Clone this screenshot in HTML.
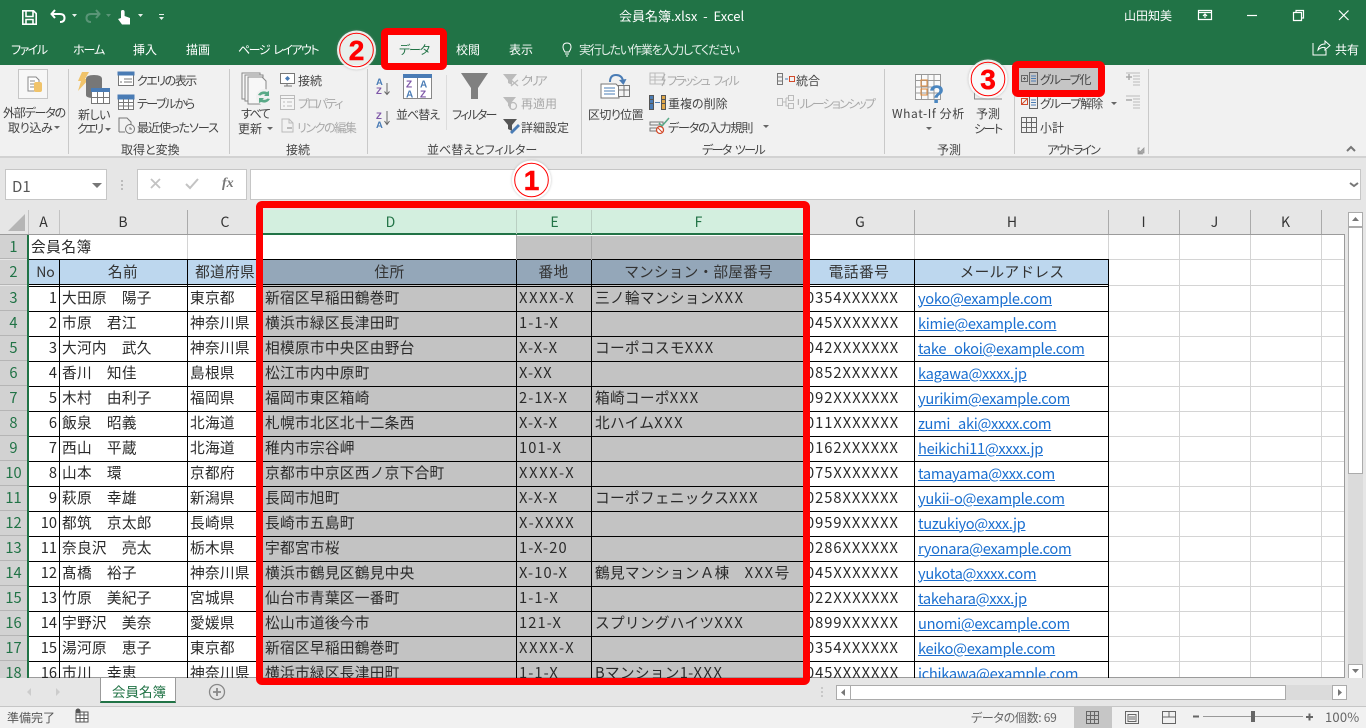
<!DOCTYPE html>
<html lang="ja"><head><meta charset="utf-8"><title>会員名簿.xlsx - Excel</title>
<style>
html,body{margin:0;padding:0;width:1366px;height:728px;overflow:hidden;background:#e6e6e6}
body{position:relative;font-family:"Liberation Sans","Noto Sans CJK JP",sans-serif}
div,span,a{position:absolute;box-sizing:border-box}
i{font-style:normal;letter-spacing:1.6px}
.t{white-space:nowrap;font:12px/16px "Noto Sans CJK JP",sans-serif;font-feature-settings:"palt";color:#444;margin-top:1px}
.w{color:#fff}.g{color:#a9a9a9}
.sep{width:1px;top:69px;height:85px;background:#c9c9c9}
svg{position:absolute;left:0;top:0}
#sheet{left:0;top:0;width:1366px;height:678px;overflow:hidden;font:14.67px/24px "Noto Sans CJK JP",sans-serif;color:#2a2a2a}
.r{left:0;width:1345px;height:25px}
.r span{top:0;white-space:nowrap}
.r .n{left:0;width:27px;text-align:center;color:#217346;background:#d2d2d2;height:25px;border-bottom:1px solid #b5b5b5}
.r .a{left:28px;width:29px;text-align:right}
.r .b{left:62px;letter-spacing:.3px}.r .c{left:190px;letter-spacing:.3px}.r .d{left:265px;letter-spacing:.3px}.r .e{left:519px;letter-spacing:1.1px}.r .x{letter-spacing:1.7px}.r .f{left:595px;letter-spacing:.3px}.r .h{left:806px;letter-spacing:1px}
.r .m{left:918px;top:1px;color:#1a6fd0;text-decoration:underline;text-underline-offset:1px;letter-spacing:-.3px}
.ln{left:28px;width:1080px;height:1px;background:#000}
.lg{left:1108px;width:236px;height:1px;background:#d4d4d4}
.v{width:1px;background:#000;top:259px;height:419px}
.vg{width:1px;background:#d4d4d4;top:235px;height:443px}
.hd{top:210px;height:24px;text-align:center;line-height:24px;font-size:14px;color:#333}
.hh{top:260px;height:24px;text-align:center;line-height:24px;color:#333;letter-spacing:.5px}
.red{border:7px solid #f00;border-radius:6px}
</style></head><body>

<!-- title + tabs -->
<div style="left:0;top:0;width:1366px;height:65px;background:#217346"></div>
<div class="t w" style="left:619px;top:6px;font-size:13px;line-height:18px;font-feature-settings:normal">会員名簿.xlsx&nbsp; - &nbsp;Excel</div>
<div class="t w" style="left:1124px;top:7px">山田知美</div>
<div class="t w" style="left:11px;top:41px;letter-spacing:-1.5px">ファイル</div>
<div class="t w" style="left:73px;top:41px;letter-spacing:-1px">ホーム</div>
<div class="t w" style="left:133px;top:41px">挿入</div>
<div class="t w" style="left:186px;top:41px">描画</div>
<div class="t w" style="left:238px;top:41px;letter-spacing:-1.5px;word-spacing:3px">ページ レイアウト</div>
<div class="t w" style="left:456px;top:41px">校閲</div>
<div class="t w" style="left:509px;top:41px">表示</div>
<div class="t" style="left:579px;top:41px;color:#e4efe9;letter-spacing:-1.2px">実行したい作業を入力してください</div>
<div class="t w" style="left:1335px;top:41px">共有</div>

<!-- ribbon -->
<div style="left:0;top:65px;width:1366px;height:93px;background:#f1f1f1;border-bottom:2px solid #d2d2d2"></div>
<div class="sep" style="left:68px"></div><div class="sep" style="left:229px"></div><div class="sep" style="left:367px"></div><div class="sep" style="left:581px"></div><div class="sep" style="left:884px"></div><div class="sep" style="left:1014px"></div><div class="sep" style="left:1148px"></div>
<div class="sep" style="left:446px;top:75px;height:55px;background:#dcdcdc"></div>
<div class="t" style="left:3px;top:104px;letter-spacing:-1.2px">外部データの</div>
<div class="t" style="left:8px;top:119px;letter-spacing:-.3px">取り込み</div>
<div class="t" style="left:137px;top:72px;letter-spacing:-1.5px">クエリの表示</div>
<div class="t" style="left:137px;top:95px;letter-spacing:-1.5px">テーブルから</div>
<div class="t" style="left:137px;top:119px;letter-spacing:-1px">最近使ったソース</div>
<div class="t" style="left:78px;top:106px;letter-spacing:-.5px">新しい</div>
<div class="t" style="left:77px;top:120px;letter-spacing:-2.5px">クエリ</div>
<div class="t" style="left:121px;top:141px">取得と変換</div>
<div class="t" style="left:241px;top:105px;letter-spacing:-1.5px">すべて</div>
<div class="t" style="left:238px;top:120px">更新</div>
<div class="t" style="left:298px;top:72px">接続</div>
<div class="t g" style="left:298px;top:95px;letter-spacing:-2px">プロパティ</div>
<div class="t g" style="left:297px;top:119px;letter-spacing:-1.4px">リンクの編集</div>
<div class="t" style="left:286px;top:141px">接続</div>
<div class="t" style="left:396px;top:106px;letter-spacing:-1px">並べ替え</div>
<div class="t" style="left:452px;top:106px;letter-spacing:-1.8px">フィルター</div>
<div class="t g" style="left:521px;top:72px;letter-spacing:-2.6px">クリア</div>
<div class="t g" style="left:521px;top:95px">再適用</div>
<div class="t" style="left:521px;top:119px">詳細設定</div>
<div class="t" style="left:427px;top:141px">並べ替えとフィルター</div>
<div class="t" style="left:588px;top:106px;letter-spacing:-.6px">区切り位置</div>
<div class="t g" style="left:667px;top:72px;letter-spacing:-1.8px;word-spacing:3px">フラッシュ フィル</div>
<div class="t" style="left:668px;top:95px">重複の削除</div>
<div class="t" style="left:668px;top:119px;letter-spacing:-1.1px">データの入力規則</div>
<div class="t" style="left:796px;top:72px">統合</div>
<div class="t g" style="left:796px;top:95px;letter-spacing:-1.8px">リレーションシップ</div>
<div class="t" style="left:702px;top:141px;letter-spacing:-1.6px;word-spacing:3px">データ ツール</div>
<div class="t" style="left:892px;top:105px;font-feature-settings:normal;letter-spacing:.6px">What-If 分析</div>
<div class="t" style="left:976px;top:105px">予測</div>
<div class="t" style="left:974px;top:120px;letter-spacing:-1.5px">シート</div>
<div class="t" style="left:937px;top:141px">予測</div>
<div style="left:1019px;top:68px;width:80px;height:22px;background:#c5c5c5"></div>
<div class="t" style="left:1040px;top:71px;letter-spacing:-1.2px">グループ化</div>
<div class="t" style="left:1040px;top:95px;letter-spacing:-1px">グループ解除</div>
<div class="t" style="left:1040px;top:119px">小計</div>
<div class="t" style="left:1047px;top:141px;letter-spacing:-1.8px">アウトライン</div>

<!-- formula bar -->
<div style="left:5px;top:169px;width:102px;height:31px;background:#fff;border:1px solid #c6c6c6"></div>
<div style="left:137px;top:169px;width:110px;height:31px;background:#fff;border:1px solid #c6c6c6"></div>
<div style="left:250px;top:169px;width:1111px;height:31px;background:#fff;border:1px solid #c6c6c6"></div>
<div class="t" style="left:12px;top:177px;font-size:15px;line-height:18px;color:#555;font-feature-settings:normal">D1</div>
<div class="t" style="left:222px;top:175px;font:italic bold 14px/16px 'Liberation Serif',serif;color:#777">fx</div>

<!-- sheet -->
<div id="sheet">
<div style="left:0;top:210px;width:1345px;height:25px;background:#e6e6e6;border-bottom:1px solid #9b9b9b"></div>
<div style="left:28px;top:235px;width:1316px;height:443px;background:#fff"></div>
<div style="left:263px;top:210px;width:541px;height:24px;background:#d3efdf"></div>
<div style="left:263px;top:233px;width:541px;height:2px;background:#217346"></div>
<div style="left:516px;top:236px;width:288px;height:24px;background:#c3c3c3"></div>
<div style="left:263px;top:260px;width:541px;height:24px;background:#94a7b9"></div>
<div style="left:263px;top:285px;width:541px;height:393px;background:#c3c3c3"></div>
<div style="left:59px;top:260px;width:204px;height:24px;background:#bdd7ee"></div>
<div style="left:28px;top:260px;width:31px;height:24px;background:#bdd7ee"></div>
<div style="left:804px;top:260px;width:304px;height:24px;background:#bdd7ee"></div>

<!-- gridlines -->
<div class="vg" style="left:187px;height:25px"></div><div class="vg" style="left:914px;height:25px"></div><div class="vg" style="left:1108px"></div><div class="vg" style="left:1179px"></div><div class="vg" style="left:1250px"></div><div class="vg" style="left:1321px"></div>
<div class="lg" style="top:259px"></div><div class="lg" style="top:285px"></div><div class="lg" style="top:311px"></div><div class="lg" style="top:336px"></div><div class="lg" style="top:361px"></div><div class="lg" style="top:386px"></div><div class="lg" style="top:411px"></div><div class="lg" style="top:436px"></div><div class="lg" style="top:461px"></div><div class="lg" style="top:486px"></div><div class="lg" style="top:511px"></div><div class="lg" style="top:536px"></div><div class="lg" style="top:561px"></div><div class="lg" style="top:586px"></div><div class="lg" style="top:611px"></div><div class="lg" style="top:636px"></div><div class="lg" style="top:661px"></div>
<div style="left:1344px;top:234px;width:1px;height:444px;background:#9b9b9b"></div>
<div style="left:0;top:677px;width:1345px;height:1px;background:#9b9b9b"></div>

<!-- column headers -->
<div style="left:28px;top:210px;width:1px;height:24px;background:#c3c3c3"></div><div style="left:59px;top:210px;width:1px;height:24px;background:#c3c3c3"></div><div style="left:187px;top:210px;width:1px;height:24px;background:#aaa"></div><div style="left:516px;top:210px;width:1px;height:24px;background:#b9cfc2"></div><div style="left:591px;top:210px;width:1px;height:24px;background:#b9cfc2"></div><div style="left:914px;top:210px;width:1px;height:24px;background:#aaa"></div><div style="left:1108px;top:210px;width:1px;height:24px;background:#aaa"></div><div style="left:1179px;top:210px;width:1px;height:24px;background:#aaa"></div><div style="left:1250px;top:210px;width:1px;height:24px;background:#aaa"></div><div style="left:1321px;top:210px;width:1px;height:24px;background:#aaa"></div>
<svg width="28" height="235"><path d="M25 214V231H8Z" fill="#b5b5b5"/></svg>
<div class="hd" style="left:28px;width:31px">A</div><div class="hd" style="left:59px;width:128px">B</div><div class="hd" style="left:187px;width:76px">C</div>
<div class="hd" style="left:264px;width:253px;color:#217346">D</div><div class="hd" style="left:517px;width:75px;color:#217346">E</div><div class="hd" style="left:592px;width:213px;color:#217346">F</div>
<div class="hd" style="left:805px;width:110px">G</div><div class="hd" style="left:915px;width:194px">H</div><div class="hd" style="left:1108px;width:71px">I</div><div class="hd" style="left:1179px;width:71px">J</div><div class="hd" style="left:1250px;width:71px">K</div>

<!-- rows 1,2 -->
<div class="r" style="top:235px;height:24px"><span class="n" style="height:24px">1</span><span style="left:31px;letter-spacing:.5px">会員名簿</span></div>
<div class="r" style="top:260px"><span class="n">2</span></div>
<div class="hh" style="left:30px;width:31px;letter-spacing:0;font-size:14px">No</div><div class="hh" style="left:59px;width:128px">名前</div><div class="hh" style="left:187px;width:76px;letter-spacing:.3px;white-space:nowrap">都道府県</div>
<div class="hh" style="left:263px;width:253px">住所</div><div class="hh" style="left:516px;width:75px">番地</div><div class="hh" style="left:592px;width:213px;letter-spacing:.2px">マンション・部屋番号</div>
<div class="hh" style="left:804px;width:110px">電話番号</div><div class="hh" style="left:915px;width:194px;letter-spacing:.3px">メールアドレス</div>

<!-- data rows -->
<div class="r" style="top:286px"><span class="n">3</span><span class="a">1</span><span class="b">大田原　陽子</span><span class="c">東京都</span><span class="d">新宿区早稲田鶴巻町</span><span class="e x">XXXX-X</span><span class="f">三ノ輪マンション<i>XXX</i></span><span class="h">0354XXXXXX</span><span class="m">yoko@example.com</span></div>
<div class="r" style="top:311px"><span class="n">4</span><span class="a">2</span><span class="b">市原　君江</span><span class="c">神奈川県</span><span class="d">横浜市緑区長津田町</span><span class="e">1-1-X</span><span class="h">045XXXXXXX</span><span class="m">kimie@example.com</span></div>
<div class="r" style="top:336px"><span class="n">5</span><span class="a">3</span><span class="b">大河内　武久</span><span class="c">神奈川県</span><span class="d">相模原市中央区由野台</span><span class="e">X-X-X</span><span class="f">コーポコスモ<i>XXX</i></span><span class="h">042XXXXXXX</span><span class="m">take_okoi@example.com</span></div>
<div class="r" style="top:361px"><span class="n">6</span><span class="a">4</span><span class="b">香川　知佳</span><span class="c">島根県</span><span class="d">松江市内中原町</span><span class="e">X-XX</span><span class="h">0852XXXXXX</span><span class="m">kagawa@xxxx.jp</span></div>
<div class="r" style="top:386px"><span class="n">7</span><span class="a">5</span><span class="b">木村　由利子</span><span class="c">福岡県</span><span class="d">福岡市東区箱崎</span><span class="e">2-1X-X</span><span class="f">箱崎コーポ<i>XXX</i></span><span class="h">092XXXXXXX</span><span class="m">yurikim@example.com</span></div>
<div class="r" style="top:411px"><span class="n">8</span><span class="a">6</span><span class="b">飯泉　昭義</span><span class="c">北海道</span><span class="d">札幌市北区北十二条西</span><span class="e">X-X-X</span><span class="f">北ハイム<i>XXX</i></span><span class="h">011XXXXXXX</span><span class="m">zumi_aki@xxxx.com</span></div>
<div class="r" style="top:436px"><span class="n">9</span><span class="a">7</span><span class="b">西山　平蔵</span><span class="c">北海道</span><span class="d">稚内市宗谷岬</span><span class="e">101-X</span><span class="h">0162XXXXXX</span><span class="m">heikichi11@xxxx.jp</span></div>
<div class="r" style="top:461px"><span class="n">10</span><span class="a">8</span><span class="b">山本　環</span><span class="c">京都府</span><span class="d">京都市中京区西ノ京下合町</span><span class="e x">XXXX-X</span><span class="h">075XXXXXXX</span><span class="m">tamayama@xxx.com</span></div>
<div class="r" style="top:486px"><span class="n">11</span><span class="a">9</span><span class="b">萩原　幸雄</span><span class="c">新潟県</span><span class="d">長岡市旭町</span><span class="e">X-X-X</span><span class="f">コーポフェニックス<i>XXX</i></span><span class="h">0258XXXXXX</span><span class="m">yukii-o@example.com</span></div>
<div class="r" style="top:511px"><span class="n">12</span><span class="a">10</span><span class="b">都筑　京太郎</span><span class="c">長崎県</span><span class="d">長崎市五島町</span><span class="e x">X-XXXX</span><span class="h">0959XXXXXX</span><span class="m">tuzukiyo@xxx.jp</span></div>
<div class="r" style="top:536px"><span class="n">13</span><span class="a">11</span><span class="b">奈良沢　亮太</span><span class="c">栃木県</span><span class="d">宇都宮市桜</span><span class="e">1-X-20</span><span class="h">0286XXXXXX</span><span class="m">ryonara@example.com</span></div>
<div class="r" style="top:561px"><span class="n">14</span><span class="a">12</span><span class="b">髙橋　裕子</span><span class="c">神奈川県</span><span class="d">横浜市鶴見区鶴見中央</span><span class="e">X-10-X</span><span class="f">鶴見マンションＡ棟　<i>XXX</i>号</span><span class="h">045XXXXXXX</span><span class="m">yukota@xxxx.com</span></div>
<div class="r" style="top:586px"><span class="n">15</span><span class="a">13</span><span class="b">竹原　美紀子</span><span class="c">宮城県</span><span class="d">仙台市青葉区一番町</span><span class="e">1-1-X</span><span class="h">022XXXXXXX</span><span class="m">takehara@xxx.jp</span></div>
<div class="r" style="top:611px"><span class="n">16</span><span class="a">14</span><span class="b">宇野沢　美奈</span><span class="c">愛媛県</span><span class="d">松山市道後今市</span><span class="e">121-X</span><span class="f">スプリングハイツ<i>XXX</i></span><span class="h">0899XXXXXX</span><span class="m">unomi@excample.com</span></div>
<div class="r" style="top:636px"><span class="n">17</span><span class="a">15</span><span class="b">湯河原　恵子</span><span class="c">東京都</span><span class="d">新宿区早稲田鶴巻町</span><span class="e x">XXXX-X</span><span class="h">0354XXXXXX</span><span class="m">keiko@example.com</span></div>
<div class="r" style="top:661px"><span class="n">18</span><span class="a">16</span><span class="b">市川　幸恵</span><span class="c">神奈川県</span><span class="d">横浜市緑区長津田町</span><span class="e">1-1-X</span><span class="f">Bマンション1-<i>XXX</i></span><span class="h">045XXXXXXX</span><span class="m">ichikawa@example.com</span></div>

<!-- black grid -->
<div class="ln" style="top:259px"></div><div class="ln" style="top:284px"></div><div class="ln" style="top:286px"></div><div class="ln" style="top:311px"></div><div class="ln" style="top:336px"></div><div class="ln" style="top:361px"></div><div class="ln" style="top:386px"></div><div class="ln" style="top:411px"></div><div class="ln" style="top:436px"></div><div class="ln" style="top:461px"></div><div class="ln" style="top:486px"></div><div class="ln" style="top:511px"></div><div class="ln" style="top:536px"></div><div class="ln" style="top:561px"></div><div class="ln" style="top:586px"></div><div class="ln" style="top:611px"></div><div class="ln" style="top:636px"></div><div class="ln" style="top:661px"></div>
<div class="v" style="left:59px"></div><div class="v" style="left:187px"></div><div class="v" style="left:516px"></div><div class="v" style="left:591px"></div><div class="v" style="left:914px"></div><div class="v" style="left:1108px"></div>
<div style="left:516px;top:235px;width:1px;height:25px;background:#a8a8a8"></div>
<div style="left:591px;top:236px;width:1px;height:24px;background:#a8a8a8"></div>
<div style="left:27px;top:235px;width:2px;height:443px;background:#217346"></div>
</div>

<!-- vertical scrollbar -->
<div style="left:1348px;top:212px;width:15px;height:467px;background:#dbdbdb"></div>
<div style="left:1348px;top:227px;width:15px;height:247px;background:#fff;border:1px solid #ababab"></div>
<div style="left:1348px;top:212px;width:15px;height:15px;background:#fff;border:1px solid #ababab"></div>
<div style="left:1348px;top:664px;width:15px;height:15px;background:#fff;border:1px solid #ababab"></div>

<!-- sheet tabs -->
<div style="left:0;top:678px;width:1366px;height:28px;background:#e6e6e6"></div>
<div style="left:100px;top:678px;width:76px;height:25px;background:#fff;border:1px solid #9b9b9b;border-top:0;border-bottom:2px solid #217346"></div>
<div class="t" style="left:112px;top:681px;font-size:13.5px;line-height:18px;color:#217346;font-feature-settings:normal">会員名簿</div>
<!-- horizontal scrollbar -->
<div style="left:836px;top:685px;width:511px;height:15px;background:#dbdbdb"></div>
<div style="left:850px;top:685px;width:436px;height:15px;background:#fff;border:1px solid #ababab"></div>
<div style="left:836px;top:685px;width:15px;height:15px;background:#fff;border:1px solid #ababab"></div>
<div style="left:1332px;top:685px;width:15px;height:15px;background:#fff;border:1px solid #ababab"></div>

<!-- status bar -->
<div style="left:0;top:706px;width:1366px;height:22px;background:#f1f1f1;border-top:1px solid #c6c6c6"></div>
<div style="left:1074px;top:707px;width:38px;height:21px;background:#c6c6c6"></div>
<div class="t" style="left:7px;top:709px;color:#555;font-feature-settings:normal">準備完了</div>
<div class="t" style="left:971px;top:709px;color:#666;letter-spacing:-.3px">データの個数: 69</div>
<div class="t" style="left:1325px;top:708px;color:#666;font-size:13px;font-feature-settings:normal;letter-spacing:.2px">100%</div>

<!-- icons -->
<svg width="1366" height="728" viewBox="0 0 1366 728" fill="none">
<!-- qat -->
<path d="M22.800 10.800H33.500L36.200 13.500V24.200H22.800ZM26 11V16.500H33V11M26 24V19.500H33V24" stroke="#fff" stroke-width="1.600"/>
<path d="M55 10L51.500 14 55 18M52 14H60Q64.500 14 64.500 18 64.500 22 60 22" stroke="#fff" stroke-width="2"/>
<path d="M96 10L99.500 14 96 18M99 14H91Q86.500 14 86.500 18 86.500 22 91 22" stroke="#5a9577" stroke-width="2"/>
<path d="M121 18V11.500Q121 10 122.800 10 124.600 10 124.600 12V16L130 18V24.500H122L118 19Z" fill="#fff"/>
<path d="M72 14h5l-2.500 3zM138 14h5l-2.500 3zM159 17h5l-2.500 3zM159 14h5v1h-5z" fill="#e6f0eb"/><path d="M106 14h5l-2.500 3z" fill="#5a9577"/>
<!-- window controls -->
<g stroke="#fff" stroke-width="1.200"><path d="M1198.500 10.500H1211.500V19.500H1198.500ZM1198.500 12.500H1211.500M1205 18V14M1203 16L1205 14 1207 16"/><path d="M1247 15.500H1257"/><path d="M1293.500 12.500H1301.500V20.500H1293.500ZM1296 12V10.500H1303.500V18H1302"/><path d="M1339 10.500L1348.500 20M1348.500 10.500L1339 20"/>
<path d="M1313 43V55H1326V50M1318 50Q1319 44 1325 44V41L1330 45.500 1325 50V47.500Q1321 47 1318 50Z" stroke-width="1"/>
<path d="M565 52Q563 49 563 47 563 43 567 43 571 43 571 47 571 49 569 52ZM565 54H569M566 56H568" stroke-width="1"/></g>

<!-- external data -->
<rect x="18.500" y="69.500" width="29" height="29" fill="#f7f7f7" stroke="#c6c6c6"/>
<path d="M28 77h8l3 3v11H28Z" fill="#fff" stroke="#888"/><path d="M30 81h5M30 84h5M30 87h5" stroke="#888"/><rect x="34" y="82" width="8" height="10" rx="2" fill="#f0c36a"/>
<!-- new query -->
<path d="M82 72h7l-4 7h4l-11 12 3-10h-3z" fill="#f0c36a"/>
<path d="M86 79q0-4 8-4t8 4v16q0 3-8 3t-8-3z" fill="#777"/>
<rect x="91.500" y="88.500" width="18" height="15" fill="#fff" stroke="#777"/><path d="M91 88h19v4H91z" fill="#4a7cb5"/><path d="M97.500 92v11M103.500 92v11M91 97.500h18" stroke="#777"/>
<g stroke="#777"><rect x="118.500" y="72.500" width="15" height="13" fill="#fff"/><path d="M118 72h16v3H118z" fill="#4a7cb5" stroke="#4a7cb5"/><path d="M124 79h8M124 82h8M120 82h2" />
<rect x="118.500" y="95.500" width="15" height="14" fill="#fff"/><path d="M118 95h16v4H118z" fill="#4a7cb5" stroke="#4a7cb5"/><path d="M123.500 99v10M128.500 99v10M119 102.500h14M119 106h14"/>
<path d="M119 132V118h8l4 4v3M119 132h6"/><circle cx="130" cy="129" r="4.500"/><path d="M130 127v2h2"/></g>
<!-- refresh -->
<g stroke="#888" fill="#f7f7f7"><path d="M242 73h18v26h-18z"/><path d="M245 75h18v26h-18z"/><path d="M248 77h14l4 4v23h-18z"/></g>
<circle cx="264" cy="97" r="8" fill="#f1f1f1"/><path d="M258 95q3-5 9-3l2-1v5h-5l1.500-1.500q-3-1-5 1zM270 99q-3 5-9 3l-2 1v-5h5l-1.500 1.500q3 1 5-1z" fill="#5aa987"/>
<g stroke="#777"><rect x="280.500" y="73.500" width="14" height="10" fill="#fff"/><path d="M284 86h8M287 83v3"/><path d="M287.500 76l2.500 2.500-2.500 2.500-2.500-2.500z" fill="#4a7cb5" stroke="none"/></g>
<g stroke="#bbb"><rect x="280.500" y="95.500" width="14" height="14" fill="#f5f5f5"/><path d="M280 98.500h15M283 102h2M287 102h5M283 106h2M287 106h5"/>
<path d="M282 132v-13h7l4 4v9zM289 119v4h4"/><path d="M287 128h5" stroke-width="2"/></g>
<!-- sort -->
<text x="376" y="85" font-family="Liberation Sans" font-size="9.500" font-weight="bold" fill="#4a7cb5">A</text><text x="376" y="94" font-family="Liberation Sans" font-size="9.500" font-weight="bold" fill="#7e57a8">Z</text>
<text x="376" y="119" font-family="Liberation Sans" font-size="9.500" font-weight="bold" fill="#7e57a8">Z</text><text x="376" y="128" font-family="Liberation Sans" font-size="9.500" font-weight="bold" fill="#4a7cb5">A</text>
<path d="M387 83v11M384.500 91.500L387 94.500 389.500 91.500M387 111v13M384.500 121L387 124.500 389.500 121" stroke="#666"/>
<rect x="403.500" y="75.500" width="28" height="23" fill="#fff" stroke="#888"/><path d="M403 74h29v4H403z" fill="#4a7cb5"/><path d="M417.500 78v21" stroke="#888"/>
<g font-family="Liberation Sans" font-size="10" font-weight="bold"><text x="406" y="87.500" fill="#7e57a8">Z</text><text x="406" y="97.500" fill="#4a7cb5">A</text><text x="420" y="87.500" fill="#4a7cb5">A</text><text x="420" y="97.500" fill="#7e57a8">Z</text></g>
<!-- filter -->
<path d="M461 73h27L478 88v11h-7V88z" fill="#808080"/>
<path d="M503 74h14l-5 6v5l-4-2v-3z" fill="#bbb"/><path d="M511 80l7 6M518 80l-7 6" stroke="#bbb" stroke-width="1.300"/>
<path d="M503 97h13l-5 6v5l-3-2v-3z" fill="#bbb"/><circle cx="513" cy="106" r="3.500" stroke="#bbb" stroke-width="1.300"/>
<path d="M503 119h14l-5 6v6l-4-2v-4z" fill="#555"/><path d="M510 132l8-8 2 2-8 8z" fill="#4a7cb5"/>
<!-- text to columns -->
<path d="M601 84h15l3 3v11h-18z" fill="#fff" stroke="#777"/><path d="M604 88h11M604 91h11M604 94h11" stroke="#4a7cb5"/>
<rect x="618.500" y="85.500" width="11" height="11" fill="#f5f5f5" stroke="#777"/><path d="M618 90h12M624 86v11" stroke="#777"/>
<path d="M610 82q0-7 6-7t7 6" stroke="#4a7cb5" stroke-width="2"/><path d="M619 80l4.500 5 3-6z" fill="#4a7cb5"/>
<!-- data tools -->
<g stroke="#bbb"><rect x="650" y="73" width="14" height="11"/><path d="M650 77h14M655 73v11M650 80h14"/><path d="M665 74l-3 6h3l-3 6" stroke="#aaa"/></g>
<rect x="649.500" y="95.500" width="4" height="14" fill="#4a7cb5" stroke="#555"/><rect x="661.500" y="95.500" width="4" height="14" fill="#e0a84a" stroke="#555"/><path d="M649 99.500h5M649 103.500h5M661 99.500h5M661 103.500h5" stroke="#555"/><path d="M655 102.500h5" stroke="#4a7cb5"/>
<path d="M650 122h13v3h-13zM650 128h13v3h-13z" stroke="#777"/><path d="M659 123l3 3 7-8" stroke="#5aa987" stroke-width="1.500"/><circle cx="660" cy="130" r="3.500" fill="#fff" stroke="#d24a2a" stroke-width="1.300"/><path d="M658 128l4 4" stroke="#d24a2a"/>
<g stroke="#777"><rect x="777.500" y="73.500" width="5" height="11"/><path d="M777 77h6M777 81h6"/><path d="M785 79h3" stroke="#4a7cb5"/><rect x="789.500" y="76.500" width="5" height="5" stroke="#d24a2a"/></g>
<g stroke="#bbb"><rect x="777.500" y="98.500" width="5" height="7"/><rect x="788.500" y="95.500" width="5" height="5"/><rect x="788.500" y="103.500" width="5" height="5"/><path d="M783 102h3M786 98v8h2M786 98h2"/></g>
<!-- what-if -->
<g stroke="#999"><rect x="915.500" y="74.500" width="25" height="25" fill="#fafafa"/><path d="M921.500 74v25M928 74v25M934 74v25M915 80.500h25M915 87h25M915 93h25"/></g>
<rect x="921" y="80" width="6" height="6" fill="none" stroke="#e08a3a"/><rect x="921" y="89" width="6" height="6" fill="none" stroke="#e08a3a"/>
<text x="929" y="103" font-family="Liberation Sans" font-size="25" font-weight="bold" fill="#4a86c0">?</text>
<!-- forecast -->
<path d="M974.500 88V99H1002" stroke="#888"/>
<!-- outline -->
<g stroke="#666"><rect x="1021.500" y="75.500" width="6" height="6"/><path d="M1023 78.500h3M1024.500 77v3"/><rect x="1029.500" y="72.500" width="8" height="12"/><path d="M1031 76h5M1031 78.500h5M1031 81h5" stroke="#4a7cb5"/>
<rect x="1021.500" y="98.500" width="6" height="6" stroke="#d24a2a"/><path d="M1022 104l5-5" stroke="#d24a2a"/><rect x="1029.500" y="96.500" width="8" height="12"/><path d="M1031 100h5M1031 102.500h5M1031 105h5" stroke="#4a7cb5"/>
<rect x="1021.500" y="117.500" width="15" height="15"/><path d="M1026.500 117v15M1031.500 117v15M1021 122.500h15M1021 127.500h15"/></g>
<g stroke="#bbb"><path d="M1126 73h14M1133 76h7M1133 79h7M1133 82h7M1133 85h7M1126 96h14M1133 99h7M1133 102h7M1133 105h7M1133 108h7"/><path d="M1126 77h6M1129 74v6M1126 100h6" stroke="#aaa" stroke-width="1.500"/></g>
<path d="M1139 153h5v-5zM1138 149v-1h2M1138 149v5h5" stroke="#999" stroke-width=".8" fill="#aaa"/>
<path d="M1347 151l4-4 4 4" stroke="#777" stroke-width="2"/>
<!-- carets -->
<path d="M54 126h6l-3 3zM105 128h6l-3 3zM267 127h6l-3 3zM763 125h6l-3 3zM926 127h6l-3 3zM1111 102h6l-3 3z" fill="#666"/>
<!-- formula bar icons -->
<path d="M92 183h10l-5 5z" fill="#777"/><path d="M122 180v2M122 184v2M122 188v2" stroke="#bbb" stroke-width="2"/>
<path d="M151 179l9 9M160 179l-9 9" stroke="#c3c3c3" stroke-width="1.800"/><path d="M186 184l4 4 8-9" stroke="#c3c3c3" stroke-width="2"/>
<path d="M1350 183l4 3 4-3" stroke="#777" stroke-width="2"/>
<!-- scrollbar arrows -->
<path d="M1352 221l3.500-4 3.500 4z" fill="#777"/><path d="M1352 669l3.500 4 3.500-4z" fill="#777"/>
<path d="M840 689l0 7-4 -3.500z" fill="#777" transform="translate(5 0)"/><path d="M1338 689v7l4-3.500z" fill="#777"/>
<path d="M31 688v8l-4-4zM56 688v8l4-4z" fill="#ccc"/>
<circle cx="217" cy="692" r="7.500" stroke="#888" stroke-width="1.300"/><path d="M217 688v8M213 692h8" stroke="#888" stroke-width="1.800"/>
<path d="M822 687v2M822 691v2M822 695v2" stroke="#aaa"/>
<!-- status icons -->
<g stroke="#555"><rect x="76" y="712" width="12" height="10" fill="#fff"/><path d="M76 715h12M80 712v10M84 712v10M76 718.500h12"/></g><circle cx="78" cy="711" r="2.500" fill="#555"/>
<g stroke="#666"><rect x="1086.500" y="711.500" width="12" height="12"/><path d="M1090.500 711v13M1094.500 711v13M1086 715.500h13M1086 719.500h13"/>
<rect x="1125.500" y="711.500" width="13" height="12"/><path d="M1128 714.500h8v7h-8zM1129 717h6M1129 719h6"/>
<rect x="1162.500" y="711.500" width="13" height="12"/><path d="M1169 711v6H1163M1169 717H1176"/></g>
<path d="M1193 716.500h6" stroke="#666" stroke-width="2"/><path d="M1203 716.500h100" stroke="#999"/><rect x="1251" y="711" width="4" height="11" fill="#666"/><path d="M1306 717h7M1309.500 713.500v7" stroke="#666" stroke-width="2"/>
</svg>

<!-- red frames -->
<div class="red" style="left:256px;top:201px;width:554px;height:484px"></div>
<div class="red" style="left:381px;top:28px;width:66px;height:42px;background:#f1f1f1"></div>
<div class="t" style="left:399px;top:41px;color:#217346;letter-spacing:-1.2px">データ</div>
<div class="red" style="left:1012px;top:61px;width:93px;height:36px"></div>

<!-- numbered circles -->
<svg width="1366" height="728" viewBox="0 0 1366 728">
<defs><filter id="sh" x="-20%" y="-20%" width="140%" height="140%"><feGaussianBlur stdDeviation="1"/></filter></defs>
<g font-family="Liberation Sans" font-size="28" font-weight="bold" fill="#f00" stroke="#f00" stroke-width=".5" text-anchor="middle">
<circle cx="356.500" cy="50" r="20" fill="#888" stroke="none" opacity=".35" filter="url(#sh)"/><circle cx="356.500" cy="50" r="19.500" fill="#fff" stroke="none" fill-opacity=".88"/><circle cx="356.500" cy="50" r="16.800" fill="none" stroke-width="1"/><text x="356.500" y="60">2</text>
<circle cx="531.500" cy="180" r="20" fill="#888" stroke="none" opacity=".35" filter="url(#sh)"/><circle cx="531.500" cy="180" r="19.500" fill="#fff" stroke="none"/><circle cx="531.500" cy="180" r="16.800" fill="none" stroke-width="1"/><text x="531.500" y="190">1</text>
<circle cx="988" cy="79" r="20" fill="#888" stroke="none" opacity=".35" filter="url(#sh)"/><circle cx="988" cy="79" r="19.500" fill="#fff" stroke="none" fill-opacity=".88"/><circle cx="988" cy="79" r="16.800" fill="none" stroke-width="1"/><text x="988" y="89">3</text>
</g></svg>
</body></html>
